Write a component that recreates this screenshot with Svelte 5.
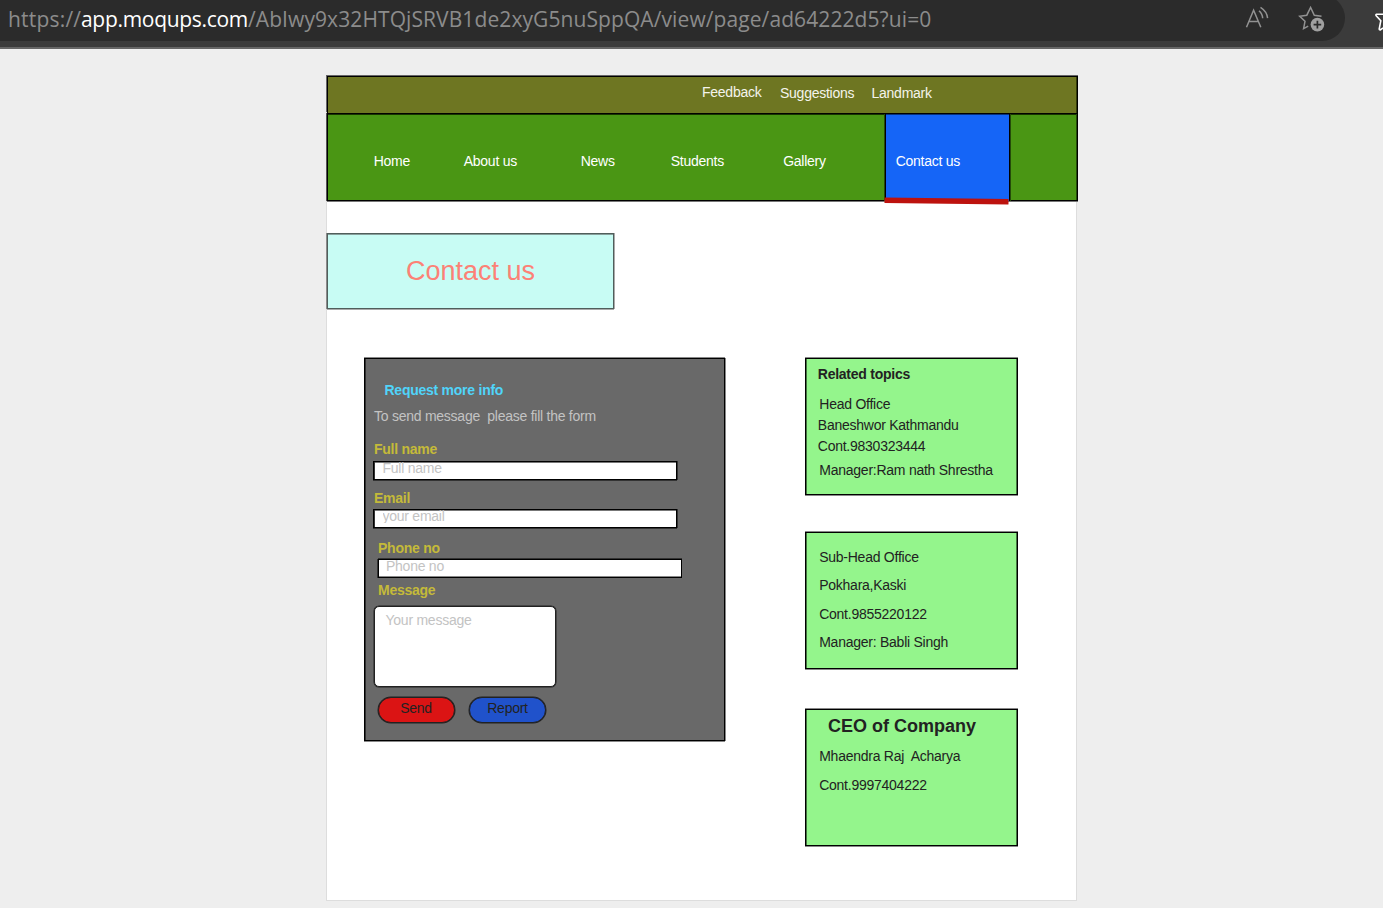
<script>
  const nav = [
    ['Home', 90],
    ['About us', 117],
    ['News', 90],
    ['Students', 112.5],
    ['Gallery', 101]
  ];
</script>

<header class="browser">
  <div class="address">
    <div class="url"><span class="scheme">https://</span><span class="host">app.moqups.com</span><span class="path">/AbIwy9x32HTQjSRVB1de2xyG5nuSppQA/view/page/ad64222d5?ui=0</span></div>
    <svg class="read" width="28" height="26" viewBox="0 0 28 26">
      <path d="M3.5 23.2 L10.6 6.2 L17.8 23.2 M6.2 17.4 H15" />
      <path d="M16 6.8 Q19.4 9.5 19.7 14.3 M17.5 3.3 Q24 7.5 24.6 14.1" />
    </svg>
    <svg class="fav" width="30" height="30" viewBox="0 0 30 30">
      <path d="M11.2 23.1 L6.6 25.6 L8 18.3 L2.7 13.3 L9.8 12.2 L13.6 4.5 L17.3 12.2 L24.5 13.3" />
      <circle cx="20.4" cy="21.6" r="6.8" />
      <path class="plus" d="M20.4 17.8 V25.4 M16.6 21.6 H24.2" />
    </svg>
  </div>
  <svg class="collections" width="10" height="28" viewBox="0 0 10 28">
    <path d="M12 9.2 H3.6 Q2.3 9.8 3.4 11 L7.8 15.8 L6.2 24 Q6.6 25.4 7.8 24.5 L12 22 M12 5.5 L10.8 9.2" />
  </svg>
</header>

<main class="page">
  <div class="topbar">
    <span class="feedback">Feedback</span><span class="suggest">Suggestions</span><span>Landmark</span>
  </div>
  <nav>
    {#each nav as [label, width]}
      <span class="link" style="width: {width}px">{label}</span>
    {/each}
    <div class="active">
      Contact us
      <svg width="126" height="9" viewBox="0 0 126 9"><path d="M1.5 3.2 L125.5 4.8" /></svg>
    </div>
  </nav>

  <h1>Contact us</h1>

  <div class="columns">
    <section class="form">
      <h2>Request more info</h2>
      <p class="intro">To send message&nbsp; please fill the form</p>
      <label for="name">Full name</label>
      <div class="input name" id="name"><span>Full name</span></div>
      <label for="email">Email</label>
      <div class="input email" id="email"><span>your email</span></div>
      <div class="phone-group">
        <label for="phone">Phone no</label>
        <div class="input phone" id="phone"><span>Phone no</span></div>
        <label class="msg-label" for="message">Message</label>
      </div>
      <div class="message" id="message">Your message</div>
      <div class="buttons">
        <div class="btn send">Send</div>
        <div class="btn report">Report</div>
      </div>
    </section>

    <aside>
      <section class="card related">
        <h3>Related topics</h3>
        <p class="head">Head Office</p>
        <p>Baneshwor Kathmandu</p>
        <p>Cont.9830323444</p>
        <p class="manager">Manager:Ram nath Shrestha</p>
      </section>
      <section class="card sub">
        <p>Sub-Head Office</p>
        <p>Pokhara,Kaski</p>
        <p>Cont.9855220122</p>
        <p>Manager: Babli Singh</p>
      </section>
      <section class="card ceo">
        <h3>CEO of Company</h3>
        <p>Mhaendra Raj&nbsp; Acharya</p>
        <p>Cont.9997404222</p>
      </section>
    </aside>
  </div>
</main>

<style>
  :global(body) {
    background: #eee;
    overflow: hidden;
    font: 14px/16px "Liberation Sans", Arial, sans-serif;
    letter-spacing: -0.25px;
    color: #222;
  }
  :global(body *) { box-sizing: border-box; }
  h1, h2, h3, p { margin: 0; font-size: inherit; }

  .browser {
    display: flex;
    justify-content: space-between;
    height: 49px;
    background: #3b3b3b;
    border-bottom: 2px solid #666;
    overflow: hidden;
  }
  .address {
    display: flex;
    width: 1345px;
    height: 46px;
    margin-top: -5px;
    padding-top: 5px;
    background: #2b2b2b;
    border-radius: 0 23px 23px 0;
  }
  .url {
    width: 1243px;
    padding-left: 8px;
    font: 21px/38px "Open Sans", "Noto Sans", sans-serif;
    letter-spacing: 0.09px;
    color: #8c8c8c;
    white-space: nowrap;
  }
  .url span { display: inline-block; }
  .scheme { width: 73px; letter-spacing: 0.2px; }
  .host { width: 167px; color: #fff; letter-spacing: -0.3px; }
  .browser svg { flex: none; fill: none; stroke: #929292; stroke-width: 1.5; }
  .read { margin-top: 4px; }
  .fav { margin: 3px 0 0 26px; }
  .fav circle { fill: #a0a0a0; stroke: none; }
  .fav .plus { stroke: #2b2b2b; stroke-width: 1.7; }
  .browser .collections { margin-top: 5px; stroke: #fff; stroke-width: 1.6; }

  .page {
    width: 751px;
    height: 825px;
    margin: 27px 0 0 326px;
    background: #fff;
    border: 1px solid #ddd;
    border-top: 0;
  }
  .topbar {
    display: flex;
    width: 751px;
    height: 37px;
    padding: 8px 0 0 374px;
    border: solid #000;
    border-width: 1px 1px 0;
    background: #6e7622;
    box-shadow: -1px -1px #666, 0 -1px #666, inset -1px 0 #333b0a;
    color: #f4f4ec;
  }
  .feedback { width: 78px; margin-top: -1px; }
  .suggest { width: 91.5px; }
  nav {
    display: flex;
    width: 751px;
    height: 88px;
    padding-left: 45.7px;
    border: 1px solid #000;
    background: #4a9614;
    box-shadow: -1px 0 #555, 0 1px #777, inset -1px 0 #254b0a, inset 0 1px #183400;
    color: #fff;
  }
  .link { padding-top: 39px; }
  .active {
    position: relative;
    width: 125px;
    height: 87px;
    margin-left: 0.8px;
    padding: 39px 0 0 9.7px;
    border: solid #000;
    border-width: 0 1px;
    background: #1565f7;
    box-shadow: inset 0 1px #08327b, -1px 0 #254b0a, 1px 0 #254b0a;
  }
  .active svg { position: absolute; left: -2.5px; bottom: -5px; overflow: visible; }
  .active path { stroke: #bd120e; stroke-width: 5.6; }

  h1 {
    width: 287px;
    height: 76px;
    margin: 32px 0 0;
    padding-top: 22px;
    border: 1px solid #505e5b;
    background: #c8fcf4;
    box-shadow: -1px 0 #8b8b8b, 1px 0 #aaa, 0 1px #aaa, inset 0 1px #879f9b;
    color: #fc8176;
    font-size: 27px;
    line-height: 30px;
    font-weight: 400;
    letter-spacing: 0;
    text-align: center;
  }

  .columns { display: flex; margin: 49px 0 0 37px; }
  .form {
    width: 361px;
    height: 383px;
    padding: 23px 0 0 8px;
    border: 1px solid #000;
    background: #696969;
    box-shadow: 0 -1px #888, 1px 0 #888, 0 1px #888, inset 1px 0 #303030;
  }
  h2 { margin-left: 11.5px; color: #50d4fa; }
  .intro { margin: 10px 0 17px 1px; color: #c3c3c3; }
  label { display: block; margin-left: 1px; color: #c4ba39; font-weight: 700; }
  .input {
    width: 304px;
    height: 19px;
    padding-left: 8.5px;
    border: 1px solid #000;
    background: #fff;
    box-shadow: inset 1px 0 #333, inset 0 1px #777, 1px 0 #333, 0 1px #333;
    color: #c3c3c3;
    line-height: 16px;
  }
  .input span { display: block; height: 16px; margin-top: -2px; }
  .name { margin: 4px 0 10px; }
  .email { margin: 3px 0 12px; }
  .email span { height: 15px; overflow: hidden; }
  .phone-group { margin-left: 4px; }
  .phone {
    margin: 3px 0 0 1px;
    padding-left: 7px;
    box-shadow: -1px 0 #333, 0 -1px #333, inset 0 -1px #888;
  }
  .msg-label { margin-top: 4px; }
  .message {
    width: 182px;
    height: 81px;
    margin: 7.5px 0 0 0.5px;
    padding: 5.5px 11px;
    border: 1px solid #222;
    border-radius: 5px;
    background: #fff;
    box-shadow: 0 0 0 .5px #222;
    color: #c3c3c3;
  }
  .buttons { display: flex; gap: 14.5px; margin: 10.5px 0 0 4.5px; }
  .btn {
    width: 77px;
    height: 26px;
    padding-top: 2px;
    border: 1px solid #222;
    border-radius: 13px;
    box-shadow: 0 0 0 .5px #222;
    text-align: center;
  }
  .send { background: #db1414; }
  .report { background: #2052cb; }

  aside { margin-left: 80px; }
  .card {
    width: 213px;
    height: 137px;
    padding-left: 13.2px;
    border: 1px solid #000;
    background: #94f58c;
    box-shadow: 0 -1px #888, 0 1px #888, inset 1px 0 #467442, inset -1px 0 #467442;
    white-space: nowrap;
  }
  .related { padding: 7px 0 0 11.8px; }
  .related p { line-height: 21px; }
  .related .head { margin: 12px 0 0 1.5px; }
  .related .manager { margin: 3px 0 0 1.5px; }
  .sub { margin-top: 37px; padding-top: 16px; }
  .sub p { margin-bottom: 12.4px; }
  .ceo { margin-top: 40px; padding-top: 6px; }
  .ceo h3 { margin: 0 0 12px 8.8px; font-size: 18px; line-height: 20px; letter-spacing: 0; }
  .ceo p { margin-bottom: 13px; }
</style>
